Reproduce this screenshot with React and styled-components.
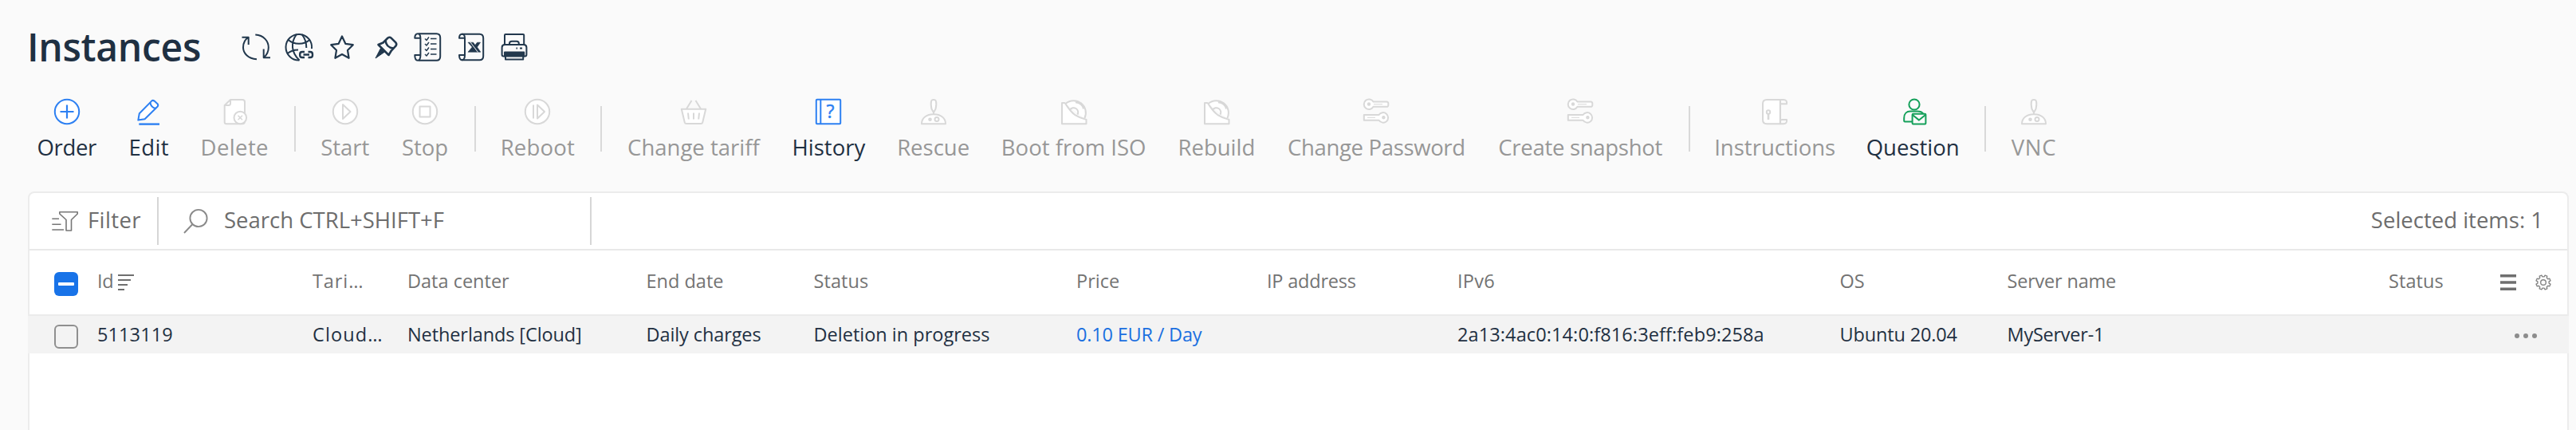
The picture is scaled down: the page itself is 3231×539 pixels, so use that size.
import React, { useState } from 'react'
import styled, { createGlobalStyle } from 'styled-components'

const GlobalStyle = createGlobalStyle`
  * { box-sizing: border-box; }
  body {
    margin: 0;
    background: #fafafa;
    font-family: "Open Sans", "Noto Sans", sans-serif;
    color: #1f3042;
  }
`

const Page = styled.div`
  height: 539px;
  padding: 26px 10px 0 35px;
  display: flex;
  flex-direction: column;
  overflow: hidden;
`

const TitleBar = styled.header`
  display: flex;
  align-items: center;
  height: 66px;
`

const Title = styled.h1`
  margin: 0;
  width: 268px;
  font-size: 48px;
  line-height: 64px;
  font-weight: 600;
  letter-spacing: -0.3px;
  text-indent: -1px;
  white-space: nowrap;
`

const TitleIcons = styled.div`
  display: flex;
  gap: 18px;
`

const LineIcon = styled.svg`
  display: block;
  flex: none;
  overflow: visible;
  width: ${p => p.$w || 36}px;
  height: ${p => p.$h || p.$w || 36}px;
  fill: none;
  stroke: ${p => p.$color || '#22384d'};
  stroke-width: ${p => p.$stroke || 2};
  stroke-linejoin: round;
`

const SortIcon = styled(LineIcon)`
  margin-top: 4px;
`

const Toolbar = styled.nav`
  display: flex;
  height: 148px;
  padding-top: 32px;
  margin-left: -9px;
`

const ToolButton = styled.button`
  flex: none;
  display: flex;
  flex-direction: column;
  align-items: center;
  width: ${p => p.$width}px;
  height: 80px;
  padding: 0;
  border: 0;
  background: none;
  font: inherit;
  color: ${p => (p.disabled ? '#979797' : '#1f3042')};
`

const ToolLabel = styled.span`
  margin-top: 9px;
  font-size: 27.5px;
  line-height: 40px;
  letter-spacing: ${p => p.$ls || 0}px;
  white-space: nowrap;
`

const ToolSeparator = styled.span`
  flex: none;
  width: 2px;
  height: 57px;
  margin: 9px 11px 0 12.3px;
  background: #d9d9d9;
`

const Panel = styled.main`
  flex: 1;
  width: 3187px;
  border: 2px solid #ececec;
  border-bottom: 0;
  border-radius: 8px 8px 0 0;
  background: #fff;
`

const FilterBar = styled.div`
  display: flex;
  align-items: center;
  height: 72px;
  border-bottom: 2px solid #e9e9e9;
  font-size: 27.5px;
  line-height: 40px;
  color: #6d6d6d;
  white-space: nowrap;
`

const FilterButton = styled.div`
  display: flex;
  align-items: center;
  gap: 11px;
  width: 162px;
  height: 60px;
  padding-left: 28px;
  border-right: 2px solid #d6d6d6;
  letter-spacing: 0.4px;
`

const SearchBox = styled.div`
  display: flex;
  align-items: center;
  gap: 20px;
  width: 543px;
  height: 60px;
  padding-left: 31px;
  border-right: 2px solid #d6d6d6;
`

const BarText = styled.span`
  padding-bottom: 3px;
`

const Selected = styled.div`
  margin-left: auto;
  padding: 0 30px 3px 0;
`

const TableRow = styled.div`
  display: grid;
  grid-template-columns: 85px 270px 119px 299.5px 210px 329.5px 239px 239px 479.5px 210px 478.5px 1fr;
  align-items: center;
  font-size: 23.5px;
  line-height: 32px;
`

const HeadRow = styled(TableRow)`
  height: 82px;
  border-bottom: 2px solid #ebebeb;
  color: #737373;
`

const BodyRow = styled(TableRow)`
  height: 47px;
  margin: 0 -2px;
  padding: 0 2px;
  background: #f3f3f3;
`

const Cell = styled.div`
  display: flex;
  align-items: center;
  gap: 6px;
  padding-bottom: 1px;
  white-space: nowrap;
  letter-spacing: ${p => p.$ls || 0}px;
  color: ${p => (p.$link ? '#1a6fe0' : 'inherit')};
`

const HeadCell = styled(Cell)`
  padding-bottom: 4px;
`

const Checkbox = styled.div`
  display: flex;
  align-items: center;
  justify-content: center;
  width: 30px;
  height: 30px;
  margin-left: 31px;
  margin-top: ${p => (p.$some ? 4 : 5)}px;
  border: ${p => (p.$some ? '0' : '2px solid #8f8f8f')};
  border-radius: 6px;
  background: ${p => (p.$some ? '#1873e8' : 'transparent')};

  &::after {
    content: '';
    display: ${p => (p.$some ? 'block' : 'none')};
    width: 20px;
    height: 4px;
    border-radius: 1px;
    background: #fff;
  }
`

const HeadTools = styled.div`
  display: flex;
  align-items: center;
  justify-content: flex-end;
  gap: 24px;
  padding-right: 20px;
`

const HeadEnd = styled.div`
  display: flex;
  justify-content: space-between;
`

const Dots = styled.div`
  display: flex;
  gap: 5px;
  justify-content: flex-end;
  padding-right: 38px;
  margin-top: 2px;

  i {
    width: 6px;
    height: 6px;
    border-radius: 50%;
    background: #8c8c8c;
  }
`

const IconText = styled.text`
  font: 400 23px "Open Sans", sans-serif;
  fill: ${p => p.$color};
  stroke: ${p => p.$color};
  stroke-width: 0.5;
`

const BLUE = '#2d80f2'
const GREEN = '#14a05a'
const GREY = '#d8d8d8'

const disc = (
  <>
    <path d="M5.5 6A15.3 15.3 0 0 1 29.3 24.3" fill="#fff" />
    <path d="M1 5H4.5C8 9.5 11 15.5 17 19.8C22.5 23.3 27 24.5 31.5 26V31.2H1Z" fill="#fff" />
    <path d="M11 13.8A4.8 4.8 0 1 1 20.4 19.6M18 4.3C23 4.8 27 8 28 12.5" />
  </>
)

const keys = (
  <>
    <path d="M12.5 3.6H29A2 2 0 0 1 31.3 6V7.5A2 2 0 0 1 29 9.8H12.5A6.3 6.3 0 1 1 12.5 3.6Z" fill="#fff" />
    <circle cx="7" cy="6.5" r="1.2" />
    <path d="M13 6.7H24" strokeWidth="1" />
    <path d="M19.5 20H.8V26.8H19.5A6.3 6.3 0 1 0 19.5 20Z" fill="#fff" />
    <circle cx="25.4" cy="23.3" r="1.2" />
    <path d="M5 23.3H15" strokeWidth="1" />
  </>
)

const plunger = (
  <>
    <path d="M1 31.2C1 24 7 19.3 16 19.3S31 24 31 31.2Z" fill="#fff" />
    <path d="M16 19V17L13.5 12.5C12.5 8 12.5 5 13 3C13.5.2 18.5.2 19 3C19.5 5 19.5 8 18.5 12.5L16 17" fill="#fff" />
    <circle cx="11.5" cy="25.8" r="1.3" />
    <circle cx="20" cy="25.6" r="2.5" />
  </>
)

const toolIcons = {
  order: (
    <>
      <circle cx="16" cy="16" r="15.2" fill="#fff" />
      <path d="M7.5 16H24.5M16 7.5V24.5" strokeWidth="2.2" />
    </>
  ),
  edit: (
    <>
      <path d="M2.3 26.6L3.8 18.3L19.2 2.6Q20.8 1.2 22.6 2.6L26.6 6.2Q28 8 26.4 9.8L10.6 25.2Z" fill="#fff" />
      <path d="M17.4 4.6C18 8.5 20.5 11.2 24.4 11.8" />
      <path d="M3.3 31.6H29" strokeWidth="2.4" />
    </>
  ),
  delete: (
    <>
      <path d="M11 1H26Q29 1 29 4V28Q29 31.2 26 31.2H6Q3.7 31.2 3.7 29V8Z" fill="#fff" />
      <path d="M11 1V5.5Q11 8 8.5 8H3.7" />
      <circle cx="23.3" cy="23.5" r="7.8" fill="#fff" />
      <path d="M20.5 20.7L26 26.3M26 20.7L20.5 26.3" strokeWidth="1.5" />
    </>
  ),
  start: (
    <>
      <circle cx="16" cy="16" r="15.2" fill="#fff" />
      <path d="M13 7L22.5 16L13 25Z" />
    </>
  ),
  stop: (
    <>
      <circle cx="16" cy="16" r="15.2" fill="#fff" />
      <rect x="9.5" y="9.5" width="13" height="13" />
    </>
  ),
  reboot: (
    <>
      <circle cx="16" cy="16" r="15.2" fill="#fff" />
      <path d="M11 7.5V24.5M16 7.5L25 16L16 24.5Z" />
    </>
  ),
  basket: (
    <>
      <path d="M.8 12.8H31.2L27.2 29.5Q26.8 31 25 31H7Q5.2 31 4.8 29.5Z" fill="#fff" />
      <path d="M7 12.5L13.5 2M25 12.5L18.5 2M9 17.5L9.8 25.5M16 17.5V25.5M23 17.5L22.2 25.5" />
    </>
  ),
  history: (
    <>
      <rect x=".8" y=".8" width="30.4" height="30.4" rx="1" fill="#fff" />
      <path d="M6.3 1V31" />
      <IconText $color={BLUE} x="18.5" y="24" textAnchor="middle">?</IconText>
    </>
  ),
  plunger,
  disc,
  keys,
  scroll: (
    <>
      <path d="M23 .9H6Q1 .9 1 6V26Q1 31.2 6 31.2H23Z" fill="#fff" />
      <path d="M22.8 6.3H31Q31.8.9 27 .9H22.8V31.2H27Q31.8 31.2 31 26H25.5Q22.8 26 22.8 28" />
      <circle cx="8" cy="16.5" r="2.2" />
      <path d="M8 18.5V26" strokeWidth="2.6" />
    </>
  ),
  question: (
    <>
      <circle cx="18" cy="7" r="6.6" />
      <path d="M15.5 28.6H6.2Q5.2 28.6 5.2 27.5V24C5.2 18.5 8.5 15.6 13 15.6H22C25.5 15.6 28 16.8 29.2 18.6" />
      <rect x="15.6" y="18.8" width="16.8" height="12.6" rx="1" />
      <path d="M15.9 20L24 26.6L32 20" />
    </>
  ),
}

const tools = [
  { icon: 'order', title: 'Order', width: 115.5, color: BLUE, ls: -0.3 },
  { icon: 'edit', title: 'Edit', width: 90.5, color: BLUE, ls: 0.4 },
  { icon: 'delete', title: 'Delete', width: 124.5, ls: 0.4 },
  { separator: true },
  { icon: 'start', title: 'Start', width: 102 },
  { icon: 'stop', title: 'Stop', width: 98.5 },
  { separator: true },
  { icon: 'reboot', title: 'Reboot', width: 133.5, ls: 0.2 },
  { separator: true },
  { icon: 'basket', title: 'Change tariff', width: 207 },
  { icon: 'history', title: 'History', width: 132, color: BLUE },
  { icon: 'plunger', title: 'Rescue', width: 130.5 },
  { icon: 'disc', title: 'Boot from ISO', width: 221.5 },
  { icon: 'disc', title: 'Rebuild', width: 137 },
  { icon: 'keys', title: 'Change Password', width: 264, ls: -0.34 },
  { icon: 'keys', title: 'Create snapshot', width: 247.5, ls: -0.29 },
  { separator: true },
  { icon: 'scroll', title: 'Instructions', width: 190 },
  { icon: 'question', title: 'Question', width: 156, color: GREEN },
  { separator: true },
  { icon: 'plunger', title: 'VNC', width: 97, ls: 0.7 },
]

const columns = [
  { title: 'Id', sort: true, value: '5113119', ls: 0.1, headLs: -0.3 },
  { title: 'Tari…', value: 'Cloud…', ls: 1.1, headLs: 0.9 },
  { title: 'Data center', value: 'Netherlands [Cloud]', ls: -0.1 },
  { title: 'End date', value: 'Daily charges', ls: -0.1 },
  { title: 'Status', value: 'Deletion in progress', headLs: 0.1 },
  { title: 'Price', value: '0.10 EUR / Day', link: true, ls: -0.19 },
  { title: 'IP address', value: '', headLs: -0.2 },
  { title: 'IPv6', value: '2a13:4ac0:14:0:f816:3eff:feb9:258a', ls: 0.11, headLs: 0.3 },
  { title: 'OS', value: 'Ubuntu 20.04', ls: -0.15 },
  { title: 'Server name', value: 'MyServer-1', ls: -0.25, headLs: -0.2 },
]

function GearIcon() {
  // eight rounded teeth around the hub
  const points = []
  for (let i = 0; i < 8; i++) {
    [[-14, 7.2], [-9, 9.2], [9, 9.2], [14, 7.2]].forEach(([a, r]) => {
      const t = ((i * 45 + 22.5 + a) * Math.PI) / 180
      points.push(`${(10 + r * Math.cos(t)).toFixed(2)},${(10 + r * Math.sin(t)).toFixed(2)}`)
    })
  }
  return (
    <LineIcon viewBox="0 0 20 20" $w={20} $color="#858585" $stroke={1.4}>
      <polygon points={points.join(' ')} />
      <circle cx="10" cy="10" r="3.3" />
    </LineIcon>
  )
}

function HeaderIcons() {
  return (
    <TitleIcons>
      <LineIcon viewBox="0 0 36 36">
        <path d="M19 33.3C8 32.5 2 25.5 2 18.5C2 12.5 5 8 8.7 5.7M.5 5.7H8.7V15" />
        <path d="M17.3 2.5C28 3 33.8 11 33.8 18.5C33.8 24 31 28.5 27.7 31.3M27.7 20.5V31.3H36" />
      </LineIcon>
      <LineIcon viewBox="0 0 36 36">
        <path d="M34 20A16.3 16.3 0 1 0 18.5 34.5" />
        <path d="M15 2C7.5 12 8 25 18.5 34.5M21.5 2C25.5 7 27.5 12 27.3 19M4 8.5C12 15.5 24 15.5 32 8.5M3 26.5C7 23 12 21.5 17 21.5" />
        <path d="M25 31H22Q19.2 31 19.2 28.2V27Q19.2 24 22 24H25M29.5 24H32Q35 24 35 27V28.2Q35 31 32 31H29.5M23.5 27.5H31" strokeWidth="2.4" />
      </LineIcon>
      <LineIcon viewBox="0 0 36 36" $stroke={2.2}>
        <path d="M18 4.5L22.3 13.8L31.8 15.2L25 22L26.6 31.8L18 27L9.4 31.8L11 22L4.2 15.2L13.7 13.8Z" />
      </LineIcon>
      <LineIcon viewBox="0 0 36 36" $stroke={2.6}>
        <path d="M15.5 12.5L21.5 6.5Q23.8 5 25.6 6.6L31.2 12.2Q33 14.2 31.6 16.4L26 22.3L22.5 28L9.5 15Z" />
        <path d="M18.5 9.5C19 15 22.5 19 28.5 19.5" />
        <path d="M6 32L12.5 19.5L17.5 24Z" fill="#22384d" strokeWidth="1" />
      </LineIcon>
      <LineIcon viewBox="0 0 36 36">
        <path d="M6 1.3H28.5Q33.2 1.3 33.2 6.3V29.8Q33.2 34.8 28.5 34.8H6" />
        <path d="M8.4 28V7Q8.4 1.3 5 1.3Q1.3 1.3 1.3 6.8H8.4M8.4 28H1.3Q1.3 34.8 5 34.8Q8.4 34.8 8.4 28" />
        <path d="M14 7.5L16 9.5L19 5.5M14 14L16 16L19 12M14 20.5L16 22.5L19 18.5M14 27L16 29L19 25M21 7.5H28.5M21 14H28.5M21 20.5H28.5M21 27H28.5" strokeWidth="1.4" />
      </LineIcon>
      <LineIcon viewBox="0 0 36 36">
        <path d="M6 1.8H28.5Q33.2 1.8 33.2 6.8V29.2Q33.2 34.2 28.5 34.2H6" />
        <path d="M10 28V7Q10 1.8 6.5 1.8Q3 1.8 3 6.8H10M10 28H3Q3 34.2 6.5 34.2Q10 34.2 10 28" />
        <path d="M14 12.2H20.5L23 15.5L25.5 12.2H29.5L25.5 18L29.8 24.2H14L19.3 18Z" fill="#22384d" strokeWidth=".6" />
        <path d="M17 12L26.5 24.5" stroke="#fafafa" strokeWidth="1" />
      </LineIcon>
      <LineIcon viewBox="0 0 36 36">
        <path d="M6 15V3Q6 2 7 2H29Q30.2 2 30.2 3V15M12 15V13.5Q12 10.8 15 10.8H21Q23.8 10.8 23.8 13.5V15" />
        <path d="M6 29.5H4.5Q2.6 29.5 2.6 27.5V18.5Q2.6 15 6 15H30Q33.4 15 33.4 18.5V27.5Q33.4 29.5 31.5 29.5H30.2" />
        <path d="M6 24.5H30.2V29.5H6Z" fill="#22384d" />
        <path d="M7 29.5V33.5H29.2V29.5M20.5 19.4H22M25 19.4H28" />
      </LineIcon>
    </TitleIcons>
  )
}

export default function App() {
  const [checked] = useState(false)

  return (
    <>
      <GlobalStyle />
      <Page>
        <TitleBar>
          <Title>Instances</Title>
          <HeaderIcons />
        </TitleBar>

        <Toolbar>
          {tools.map((tool, index) =>
            tool.separator ? (
              <ToolSeparator key={index} />
            ) : (
              <ToolButton key={index} $width={tool.width} disabled={!tool.color}>
                <LineIcon viewBox="0 0 32 32" $w={32} $color={tool.color || GREY}>
                  {toolIcons[tool.icon]}
                </LineIcon>
                <ToolLabel $ls={tool.ls}>{tool.title}</ToolLabel>
              </ToolButton>
            )
          )}
        </Toolbar>

        <Panel>
          <FilterBar>
            <FilterButton>
              <LineIcon viewBox="0 0 34 25" $w={34} $h={25} $color="#777" $stroke={1.6}>
                <path d="M9.8.8H32.2V3L24.5 10.5V24H18V10.5L9.8 3Z" />
                <path d="M.3 9.3H9M.3 16.3H11.5M.3 23H15" />
              </LineIcon>
              <BarText>Filter</BarText>
            </FilterButton>
            <SearchBox>
              <LineIcon viewBox="0 0 31 31" $w={31} $color="#8a8a8a" $stroke={1.9}>
                <circle cx="19" cy="11.5" r="10.6" />
                <path d="M11.5 19L1 30" />
              </LineIcon>
              <BarText>Search CTRL+SHIFT+F</BarText>
            </SearchBox>
            <Selected>Selected items: 1</Selected>
          </FilterBar>

          <HeadRow>
            <Checkbox $some />
            {columns.map(col => (
              <HeadCell key={col.title} $ls={col.headLs}>
                {col.title}
                {col.sort && (
                  <SortIcon viewBox="0 0 20 20" $w={20} $color="#6f6f6f">
                    <path d="M0 1H20M0 7H16M0 13H12M0 19H8" />
                  </SortIcon>
                )}
              </HeadCell>
            ))}
            <HeadEnd>
              <HeadCell $ls={0.1}>Status</HeadCell>
              <HeadTools>
                <LineIcon viewBox="0 0 20 20" $w={20} $color="#6f6f6f" $stroke={3.4}>
                  <path d="M0 1.7H20M0 10H20M0 18.3H20" />
                </LineIcon>
                <GearIcon />
              </HeadTools>
            </HeadEnd>
          </HeadRow>

          <BodyRow>
            <Checkbox $some={checked} />
            {columns.map(col => (
              <Cell key={col.title} $ls={col.ls} $link={col.link}>
                {col.value}
              </Cell>
            ))}
            <Dots>
              <i />
              <i />
              <i />
            </Dots>
          </BodyRow>
        </Panel>
      </Page>
    </>
  )
}
